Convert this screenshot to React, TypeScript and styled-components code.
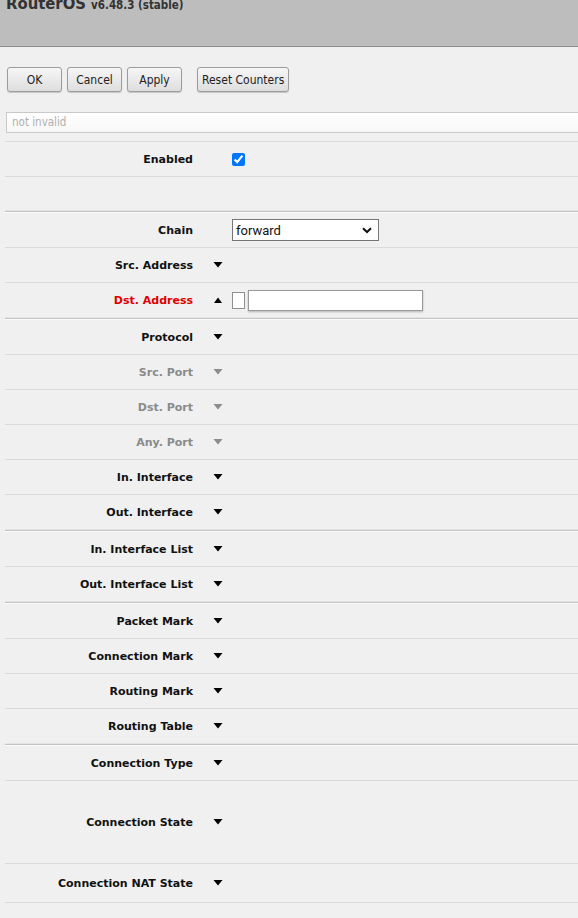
import React from "react";
import styled, { createGlobalStyle } from "styled-components";

const GlobalStyle = createGlobalStyle`
  html, body {
    margin: 0;
    padding: 0;
    background: #f0f0f0;
  }
  body {
    font-family: "DejaVu Sans", Tahoma, Verdana, sans-serif;
    font-size: 11px;
    color: #111;
  }
`;

const Page = styled.div`
  width: 578px;
  min-height: 918px;
  background: #f0f0f0;
  overflow: hidden;
`;

const Header = styled.header`
  height: 46px;
  background: #bdbdbd;
  border-bottom: 1px solid #8c8c8c;
  overflow: hidden;
`;

const Title = styled.h1`
  margin: -7px 0 0 6px;
  font-family: "DejaVu Sans Condensed", "DejaVu Sans", sans-serif;
  font-size: 16.5px;
  font-weight: bold;
  color: #333;
  line-height: 22px;
  white-space: nowrap;
`;

const Version = styled.span`
  font-size: 11.5px;
  margin-left: 5px;
`;

const Toolbar = styled.div`
  display: flex;
  align-items: center;
  gap: 5px;
  padding: 20px 0 0 7px;
`;

const Button = styled.button<{ $spaced?: boolean }>`
  height: 25px;
  min-width: 55px;
  padding: 0 4px;
  margin-left: ${(p) => (p.$spaced ? "10px" : "0")};
  font-family: "DejaVu Sans Condensed", "DejaVu Sans", sans-serif;
  font-size: 12px;
  color: #222;
  background: linear-gradient(#f6f6f6, #dedede);
  border: 1px solid #9c9c9c;
  border-radius: 3px;
  box-shadow: 0 1px 1px rgba(0, 0, 0, 0.18);
  cursor: pointer;
`;

const StatusBox = styled.div`
  margin: 20px 0 0 6px;
  height: 19px;
  border: 1px solid #c9c9c9;
  border-right: none;
  background: linear-gradient(#ffffff, #f7f7f7);
  color: #b0b0b0;
  font-family: "DejaVu Sans Condensed", "DejaVu Sans", sans-serif;
  font-size: 11.5px;
  line-height: 19px;
  padding-left: 5px;
`;

const Form = styled.div`
  margin: 8px 0 0 5px;
  border-top: 1px solid #dadada;
`;

const Section = styled.div`
  margin-bottom: 1px;
  border-bottom: 1px solid #c4c4c4;
  box-shadow: 0 1px 0 #fafafa;
  & > *:last-child {
    border-bottom: 1px solid #e4e4e4;
  }
`;

const Row = styled.div<{ $h?: number }>`
  display: flex;
  align-items: center;
  height: ${(p) => p.$h ?? 34}px;
  border-bottom: 1px solid #dadada;
`;

const Label = styled.div<{ $tone?: "normal" | "muted" | "alert" }>`
  width: 188px;
  flex: none;
  text-align: right;
  font-weight: bold;
  font-size: 11px;
  color: ${(p) =>
    p.$tone === "muted" ? "#8a8a8a" : p.$tone === "alert" ? "#e00000" : "#111"};
`;

const Value = styled.div`
  display: flex;
  align-items: center;
  margin-left: 19px;
`;

const Toggle = styled.span`
  display: inline-flex;
  width: 12px;
  height: 10px;
  align-items: center;
  justify-content: center;
`;

const Check = styled.input`
  width: 13px;
  height: 13px;
  margin: 0 0 0 20px;
  accent-color: #0075ff;
`;

const SelectBox = styled.div`
  display: flex;
  align-items: center;
  justify-content: space-between;
  box-sizing: border-box;
  width: 147px;
  height: 22px;
  margin-left: 20px;
  padding: 0 6px 0 3px;
  background: #fff;
  border: 1px solid #767676;
  font-family: Roboto, "Liberation Sans", Arial, sans-serif;
  font-size: 13px;
  color: #111;
`;

const NotBox = styled.span`
  box-sizing: border-box;
  width: 13px;
  height: 17px;
  margin-left: 8px;
  background: #fff;
  border: 1px solid #8f8f8f;
`;

const TextField = styled.input`
  box-sizing: border-box;
  width: 175px;
  height: 21px;
  margin: 0 0 0 3px;
  padding: 0 3px;
  background: #fff;
  border: 1px solid #9a9a9a;
  border-radius: 0;
  box-shadow: 0 1px 2px rgba(0, 0, 0, 0.25);
  outline: none;
`;

const Arrow = ({ up, muted }: { up?: boolean; muted?: boolean }) => (
  <Toggle>
    <svg width="10" height="6" viewBox="0 0 10 6">
      <polygon
        points={up ? "1,6 9,6 5,0.5" : "0.5,0 9.5,0 5,5.5"}
        fill={muted ? "#8c8c8c" : "#000"}
      />
    </svg>
  </Toggle>
);

const Chevron = () => (
  <svg width="10" height="7" viewBox="0 0 10 7">
    <path d="M1 1.2 L5 5 L9 1.2" fill="none" stroke="#111" strokeWidth="2" />
  </svg>
);

type Field = {
  label: string;
  muted?: boolean;
  h?: number;
};

const FieldRow = ({ label, muted, h }: Field) => (
  <Row $h={h}>
    <Label $tone={muted ? "muted" : "normal"}>{label}</Label>
    <Value>
      <Arrow muted={muted} />
    </Value>
  </Row>
);

const portFields: Field[] = [
  { label: "Protocol" },
  { label: "Src. Port", muted: true },
  { label: "Dst. Port", muted: true },
  { label: "Any. Port", muted: true },
  { label: "In. Interface" },
  { label: "Out. Interface" },
];

const listFields: Field[] = [
  { label: "In. Interface List" },
  { label: "Out. Interface List" },
];

const markFields: Field[] = [
  { label: "Packet Mark" },
  { label: "Connection Mark" },
  { label: "Routing Mark" },
  { label: "Routing Table" },
];

const connFields: Field[] = [
  { label: "Connection Type" },
  { label: "Connection State", h: 82 },
  { label: "Connection NAT State", h: 38 },
];

export default function App() {
  return (
    <Page>
      <GlobalStyle />
      <Header>
        <Title>
          RouterOS<Version>v6.48.3 (stable)</Version>
        </Title>
      </Header>

      <Toolbar>
        <Button>OK</Button>
        <Button>Cancel</Button>
        <Button>Apply</Button>
        <Button $spaced>Reset Counters</Button>
      </Toolbar>

      <StatusBox>not invalid</StatusBox>

      <Form>
        <Section>
          <Row>
            <Label>Enabled</Label>
            <Value>
              <Check type="checkbox" defaultChecked />
            </Value>
          </Row>
          <Row $h={33} />
        </Section>

        <Section>
          <Row>
            <Label>Chain</Label>
            <Value>
              <SelectBox>
                <span>forward</span>
                <Chevron />
              </SelectBox>
            </Value>
          </Row>
          <FieldRow label="Src. Address" />
          <Row>
            <Label $tone="alert">Dst. Address</Label>
            <Value>
              <Arrow up />
              <NotBox />
              <TextField type="text" />
            </Value>
          </Row>
        </Section>

        <Section>
          {portFields.map((f) => (
            <FieldRow key={f.label} {...f} />
          ))}
        </Section>

        <Section>
          {listFields.map((f) => (
            <FieldRow key={f.label} {...f} />
          ))}
        </Section>

        <Section>
          {markFields.map((f) => (
            <FieldRow key={f.label} {...f} />
          ))}
        </Section>

        {connFields.map((f) => (
          <FieldRow key={f.label} {...f} />
        ))}
      </Form>
    </Page>
  );
}
